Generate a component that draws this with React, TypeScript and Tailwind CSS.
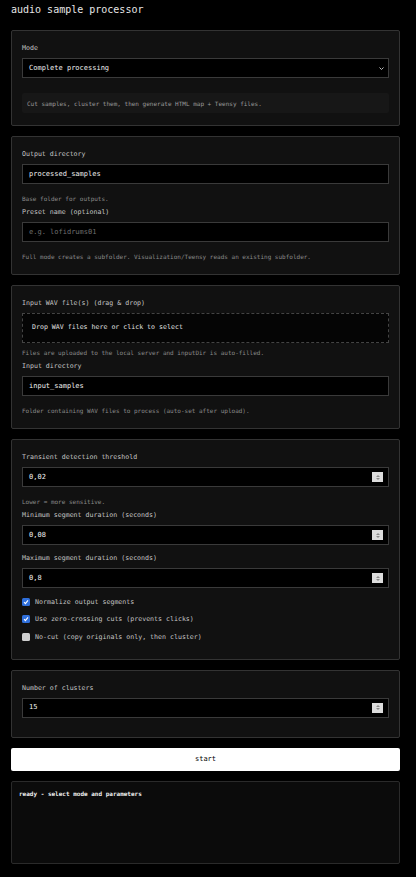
import React from "react";

const mono = { fontFamily: '"DejaVu Sans Mono", "Liberation Mono", monospace' };

function Label({ children }: { children: React.ReactNode }) {
  return <div className="mt-[4px] mb-[6px] text-[6.6px] leading-[8px] text-[#c4c4c4]">{children}</div>;
}

function Hint({ children }: { children: React.ReactNode }) {
  return <div className="mt-[6px] mb-[1px] text-[6px] leading-[8px] text-[#8a8a8a]">{children}</div>;
}

function Card({ children, last = "pb-[12px]" }: { children: React.ReactNode; last?: string }) {
  return (
    <div className={`flex flex-col rounded-[2px] border border-[#333] bg-[#111] px-[10px] pt-[9px] ${last}`}>
      {children}
    </div>
  );
}

function TextInput({ value, placeholder }: { value?: string; placeholder?: string }) {
  return (
    <div className="mb-[5px] flex h-[20px] items-center border border-[#3a3a3a] bg-black px-[6px] text-[7px]">
      {value ? (
        <span className="text-[#f2f2f2]">{value}</span>
      ) : (
        <span className="text-[#6f6f6f]">{placeholder}</span>
      )}
    </div>
  );
}

function NumberInput({ value }: { value: string }) {
  return (
    <div className="mb-[5px] flex h-[20px] items-center justify-between border border-[#3a3a3a] bg-black pl-[6px] pr-[5px] text-[7px]">
      <span className="text-[#f2f2f2]">{value}</span>
      <span className="flex h-[10px] w-[11px] flex-col items-center justify-center gap-[1px] bg-[#dcdcdc]">
        <svg width="4" height="2" viewBox="0 0 4 2">
          <path d="M0 2 L2 0 L4 2 Z" fill="#8a8a8a" />
        </svg>
        <svg width="4" height="2" viewBox="0 0 4 2">
          <path d="M0 0 L2 2 L4 0 Z" fill="#8a8a8a" />
        </svg>
      </span>
    </div>
  );
}

function Check({ checked, children }: { checked: boolean; children: React.ReactNode }) {
  return (
    <div className="flex h-[17.5px] items-center gap-[5px]">
      {checked ? (
        <span className="flex h-[8px] w-[8px] items-center justify-center rounded-[1.5px] bg-[#2f6fdb]">
          <svg width="6" height="6" viewBox="0 0 6 6">
            <path d="M1 3.2 L2.4 4.6 L5 1.4" fill="none" stroke="#fff" strokeWidth="1.1" />
          </svg>
        </span>
      ) : (
        <span className="h-[8px] w-[8px] rounded-[1.5px] bg-[#cfcfcf]" />
      )}
      <span className="text-[6.6px] leading-[8px] text-[#c4c4c4]">{children}</span>
    </div>
  );
}

export default function App() {
  return (
    <div style={mono} className="min-h-[877px] bg-black pl-[11px] pr-[16px] pb-[14px]">
      <h1 className="mb-[10px] h-[20px] text-[10px] leading-[20px] font-normal text-[#e6e6e6]">
        audio sample processor
      </h1>

      <div className="flex flex-col gap-[10px]">
        <Card>
          <Label>Mode</Label>
          <div className="mb-[5px] flex h-[20px] items-center justify-between border border-[#3a3a3a] bg-black pl-[6px] pr-[4px] text-[7px]">
            <span className="text-[#f2f2f2]">Complete processing</span>
            <svg width="5" height="3" viewBox="0 0 5 3">
              <path d="M0.5 0.5 L2.5 2.5 L4.5 0.5" fill="none" stroke="#d0d0d0" strokeWidth="0.9" />
            </svg>
          </div>
          <div className="mt-[10px] flex h-[20px] items-center rounded-[2px] bg-[#171717] pl-[5px] text-[6px] text-[#9a9a9a]">
            Cut samples, cluster them, then generate HTML map + Teensy files.
          </div>
        </Card>

        <Card>
          <Label>Output directory</Label>
          <TextInput value="processed_samples" />
          <Hint>Base folder for outputs.</Hint>
          <Label>Preset name (optional)</Label>
          <TextInput placeholder="e.g. lofidrums01" />
          <Hint>Full mode creates a subfolder. Visualization/Teensy reads an existing subfolder.</Hint>
        </Card>

        <Card>
          <Label>Input WAV file(s) (drag &amp; drop)</Label>
          <div className="flex h-[30px] items-center border border-dashed border-[#444] bg-[#050505] pl-[9px] text-[6.6px] text-[#e0e0e0]">
            Drop WAV files here or click to select
          </div>
          <Hint>Files are uploaded to the local server and inputDir is auto-filled.</Hint>
          <Label>Input directory</Label>
          <TextInput value="input_samples" />
          <Hint>Folder containing WAV files to process (auto-set after upload).</Hint>
        </Card>

        <Card last="pb-[13px]">
          <Label>Transient detection threshold</Label>
          <NumberInput value="0,02" />
          <Hint>Lower = more sensitive.</Hint>
          <Label>Minimum segment duration (seconds)</Label>
          <NumberInput value="0,08" />
          <Label>Maximum segment duration (seconds)</Label>
          <NumberInput value="0,8" />
          <div className="flex flex-col">
            <Check checked>Normalize output segments</Check>
            <Check checked>Use zero-crossing cuts (prevents clicks)</Check>
            <Check checked={false}>No-cut (copy originals only, then cluster)</Check>
          </div>
        </Card>

        <Card last="pb-[14px]">
          <Label>Number of clusters</Label>
          <NumberInput value="15" />
        </Card>

        <button className="flex h-[23px] items-center justify-center rounded-[2px] bg-white text-[7px] text-black">
          start
        </button>

        <div className="h-[83px] rounded-[2px] border border-[#2a2a2a] bg-[#0b0b0b] px-[7px] pt-[8px] text-[6px] leading-[8px] font-bold text-[#f0f0f0]">
          ready - select mode and parameters
        </div>
      </div>
    </div>
  );
}
